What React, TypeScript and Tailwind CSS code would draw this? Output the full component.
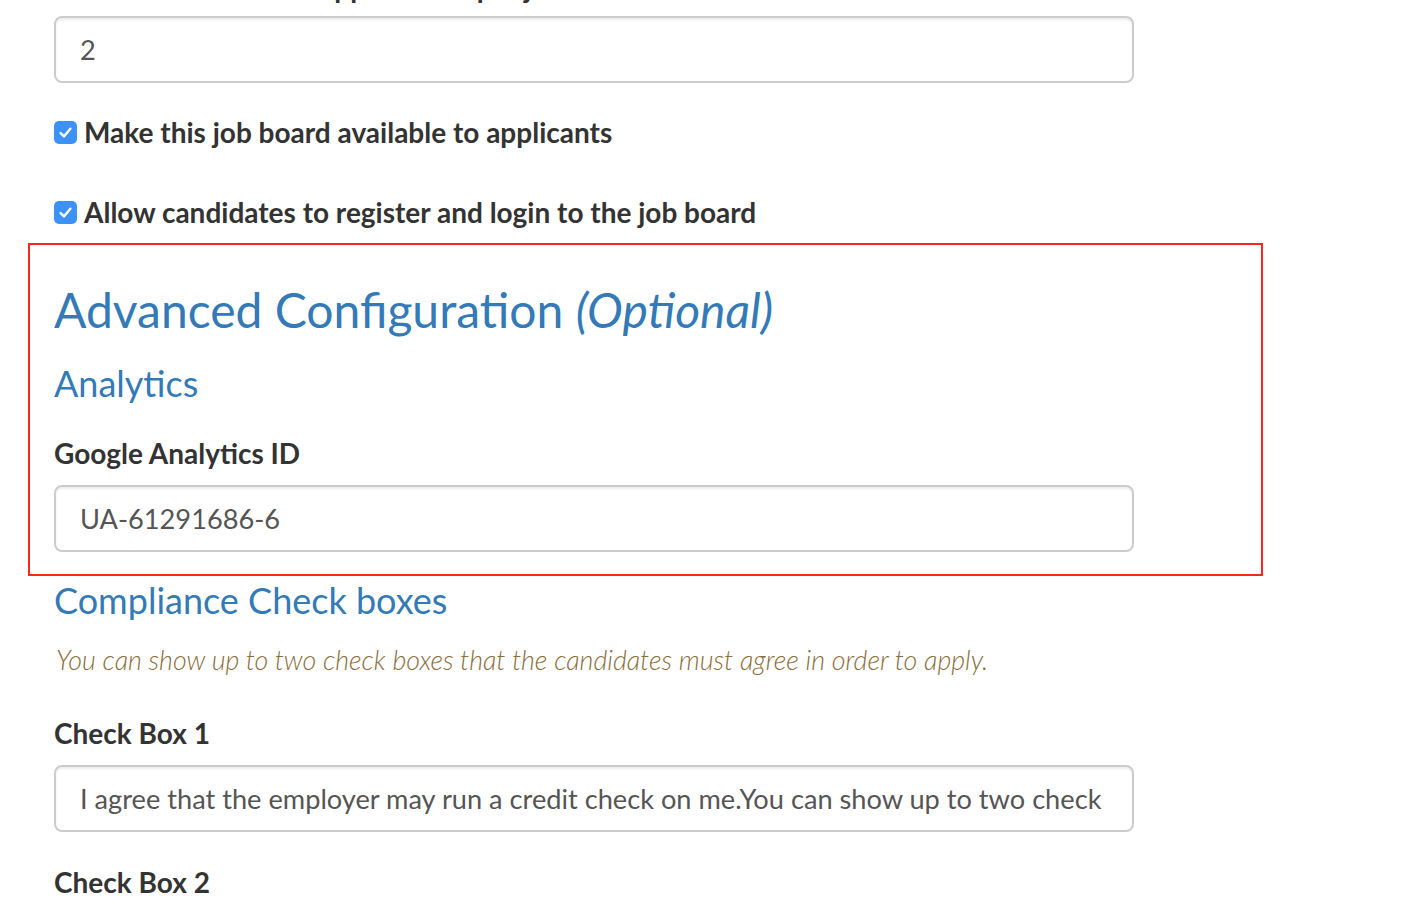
import React from 'react';

const lato = "font-['Lato','Liberation_Sans',sans-serif]";

function CheckIcon() {
  return (
    <span className="flex h-[23px] w-[23px] shrink-0 items-center justify-center rounded-[5px] bg-[#3b93f7]">
      <svg viewBox="0 0 16 16" className="h-[17px] w-[17px]" fill="none">
        <path d="M3.4 8.6 L6.5 11.7 L12.6 4.4" stroke="white" strokeWidth="2.3" strokeLinecap="round" strokeLinejoin="round" />
      </svg>
    </span>
  );
}

function Field({ value, className = '' }: { value: string; className?: string }) {
  return (
    <input
      readOnly
      value={value}
      className={`block h-[67px] w-[1080px] rounded-[8px] border-2 border-[#cccccc] bg-white px-[24px] text-[27.2px] text-[#555555] shadow-[inset_0_2px_2px_rgba(0,0,0,0.075)] outline-none ${lato} ${className}`}
    />
  );
}

function Label({ children, className = '' }: { children: React.ReactNode; className?: string }) {
  return <div className={`text-[28px] font-bold leading-[40px] text-[#333333] ${className}`}>{children}</div>;
}

function CheckRow({ children, className = '' }: { children: React.ReactNode; className?: string }) {
  return (
    <div className={`flex h-[40px] items-center gap-[7px] ${className}`}>
      <CheckIcon />
      <span className="text-[28px] font-bold leading-[40px] text-[#333333]">{children}</span>
    </div>
  );
}

export default function App() {
  return (
    <div className={`h-[904px] overflow-hidden bg-white pl-[28px] ${lato}`}>
      <div className="pl-[26px]">
        <Label className="mt-[-33px] mb-[9px]">Maximum number of applications per job</Label>
        <Field value="2" />
        <CheckRow className="mt-[29px]">Make this job board available to applicants</CheckRow>
        <CheckRow className="mt-[40px]">Allow candidates to register and login to the job board</CheckRow>
      </div>

      <div className="mt-[11px] w-[1235px] border-2 border-[#f8281c] pt-[36px] pb-[22px] pl-[24px]">
        <h3 className="text-[48px] leading-[1.2] text-[#337ab7]">
          Advanced Configuration <em>(Optional)</em>
        </h3>
        <h4 className="mt-[23px] text-[36px] leading-[1.2] text-[#337ab7]">Analytics</h4>
        <Label className="mt-[28px] mb-[12px]">Google Analytics ID</Label>
        <Field value="UA-61291686-6" />
      </div>

      <div className="pl-[26px]">
        <h4 className="mt-[3px] text-[36px] leading-[1.2] text-[#337ab7]">Compliance Check boxes</h4>
        <p className="mt-[22px] pl-[2px] text-[26.8px] font-light italic leading-[1.2] text-[#8a6d3b]">
          You can show up to two check boxes that the candidates must agree in order to apply.
        </p>
        <Label className="mt-[37px] mb-[12px]">Check Box 1</Label>
        <Field value="I agree that the employer may run a credit check on me.You can show up to two check boxes that the candidates must agree in order to apply." />
        <Label className="mt-[30px]">Check Box 2</Label>
      </div>
    </div>
  );
}
